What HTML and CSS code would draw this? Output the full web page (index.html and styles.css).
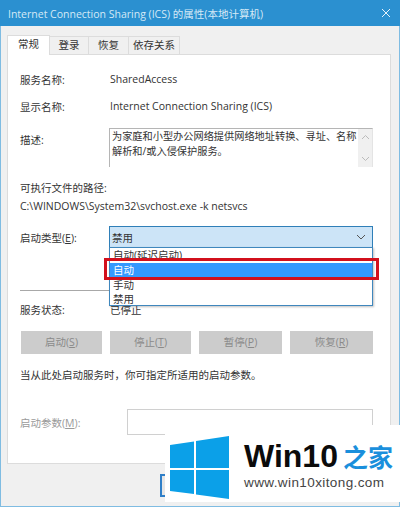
FILE: index.html
```html
<!DOCTYPE html>
<html lang="zh-CN">
<head>
    <meta charset="UTF-8">
    <meta name="viewport" content="width=device-width, initial-scale=1.0">
    <title>Internet Connection Sharing (ICS) 的属性(本地计算机)</title>
    <link rel="stylesheet" href="styles.css">
</head>
<body>
    <div class="window">
        <div class="titlebar">
            <span>Internet Connection Sharing (ICS) 的属性(本地计算机)</span>
            <svg class="close" width="10" height="10" viewBox="0 0 10 10"><path d="M1 1L9 9M9 1L1 9" stroke="#e6f2fa" stroke-width="1" fill="none"/></svg>
        </div>
        <div class="client">
            <div class="tabs">
                <div class="tab active">常规</div>
                <div class="tab tab-login">登录</div>
                <div class="tab tab-restore">恢复</div>
                <div class="tab tab-deps">依存关系</div>
            </div>
            <div class="panel">
                <div class="row row-name"><label>服务名称:</label><span>SharedAccess</span></div>
                <div class="row row-display"><label>显示名称:</label><span>Internet Connection Sharing (ICS)</span></div>
                <div class="row row-desc">
                    <label>描述:</label>
                    <div class="textarea">
                        <p>为家庭和小型办公网络提供网络地址转换、寻址、名称解析和/或入侵保护服务。</p>
                        <div class="scrollbar">
                            <svg width="9" height="6" viewBox="0 0 9 6"><path d="M1 5L4.500 1.500L8 5" stroke="#bbb" fill="none"/></svg>
                            <svg width="9" height="6" viewBox="0 0 9 6"><path d="M1 1L4.500 4.500L8 1" stroke="#bbb" fill="none"/></svg>
                        </div>
                    </div>
                </div>
                <div class="path-label">可执行文件的路径:</div>
                <div class="path-value">C:\WINDOWS\System32\svchost.exe -k netsvcs</div>
                <div class="row row-type">
                    <label>启动类型(<u>E</u>):</label>
                    <div class="select">
                        <span>禁用</span>
                        <svg width="10" height="6" viewBox="0 0 10 6"><path d="M1 1L5 5L9 1" stroke="#555" fill="none"/></svg>
                        <ul class="options">
                            <li>自动(延迟启动)</li>
                            <li class="selected">自动</li>
                            <li>手动</li>
                            <li>禁用</li>
                        </ul>
                        <div class="highlight"></div>
                    </div>
                </div>
                <hr class="divider">
                <div class="row row-status"><label>服务状态:</label><span>已停止</span></div>
                <div class="buttons">
                    <div class="btn btn-a">启动(<u>S</u>)</div>
                    <div class="btn btn-a">停止(<u>T</u>)</div>
                    <div class="btn btn-b">暂停(<u>P</u>)</div>
                    <div class="btn btn-b">恢复(<u>R</u>)</div>
                </div>
                <div class="hint">当从此处启动服务时，你可指定所适用的启动参数。</div>
                <div class="params">
                    <label>启动参数(<u>M</u>):</label>
                    <div class="param-input"></div>
                </div>
            </div>
            <div class="footer"><div class="ok"></div></div>
        </div>
    </div>

    <div class="watermark">
        <svg class="logo" width="60" height="60" viewBox="0 0 60 60">
            <path d="M0 5L24 1.500V28H0Z M26 1L59 -4V28H26Z M0 30H24V54L0 51Z M26 30H59V59L26 54.500Z" fill="#0ba0e8"/>
        </svg>
        <div class="brand">
            <div class="brand-top"><span class="win">Win10</span><span class="zhijia">之家</span></div>
            <div class="url">www.win10xitong.com</div>
        </div>
    </div>
</body>
</html>
```

FILE: styles.css
```css
* {
    box-sizing: border-box;
}
body {
    margin: 0;
    width: 400px;
    height: 507px;
    overflow: hidden;
    position: relative;
    font-family: "Open Sans", "Noto Sans CJK SC", sans-serif;
    font-size: 10.500px;
    color: #333;
    background: #f0f0f0;
}
u {
    text-decoration: underline;
}
.window {
    height: 507px;
    display: flex;
    flex-direction: column;
    border: 1px solid #7fbce2;
    border-top: none;
}
.titlebar {
    height: 26px;
    margin: 0 -1px;
    flex: none;
    display: flex;
    align-items: center;
    justify-content: space-between;
    padding: 0 9px 0 8px;
    background: #2b90d0;
    color: #d5e9f6;
}
.client {
    flex: 1;
    padding: 9px 8px 0 6px;
    display: flex;
    flex-direction: column;
}
.tabs {
    display: flex;
    align-items: flex-end;
    height: 19px;
}
.tab {
    height: 18px;
    line-height: 17px;
    text-align: center;
    background: #f0f0f0;
    border: 1px solid #dcdcdc;
    border-bottom: none;
    border-left: none;
}
.tab.active {
    width: 43px;
    height: 20px;
    margin-bottom: -1px;
    line-height: 17px;
    position: relative;
    background: #fff;
    border-left: 1px solid #dcdcdc;
}
.tab-login { width: 39px; }
.tab-restore { width: 40px; }
.tab-deps { width: 51px; }
.panel {
    height: 410px;
    background: #fff;
    border: 1px solid #dcdcdc;
    padding: 15px 17px 0 12px;
    display: flex;
    flex-direction: column;
}
.row {
    display: flex;
    align-items: center;
}
.row label {
    width: 89px;
    flex: none;
}
.row > span {
    margin-left: 1px;
}
.row-name, .row-display {
    height: 18px;
}
.row-display {
    margin-top: 9px;
}
.row-desc {
    margin-top: 13px;
    height: 39px;
    align-items: flex-start;
}
.row-desc label {
    margin-top: 3px;
    line-height: 18px;
}
.textarea {
    width: 264px;
    height: 39px;
    border: 1px solid #b5b5b5;
    border-right-color: #e4e4e4;
    border-bottom: none;
    display: flex;
    justify-content: space-between;
}
.textarea p {
    margin: 0 0 0 2px;
    width: 246px;
    line-height: 15px;
    font-size: 10.200px;
}
.scrollbar {
    width: 14px;
    display: flex;
    flex-direction: column;
    justify-content: space-between;
    align-items: center;
    padding: 5px 0 5px;
    background: #f0f0f0;
}
.path-label {
    margin-top: 12px;
    height: 18px;
    line-height: 18px;
}
.path-value {
    height: 18px;
    line-height: 18px;
}
.row-type {
    margin-top: 11px;
    height: 22px;
}
.select {
    position: relative;
    width: 264px;
    height: 22px;
    background: #cce4f7;
    border: 1px solid #2f7fb8;
    display: flex;
    align-items: center;
    justify-content: space-between;
    padding: 0 6px 0 2px;
}
.options {
    position: absolute;
    left: -1px;
    top: 20px;
    width: 264px;
    height: 59px;
    margin: 0;
    padding: 0;
    list-style: none;
    background: #fff;
    border: 1px solid #3f87bd;
    box-shadow: 1px 1px 2px rgba(0, 0, 0, 0.25);
}
.options li {
    height: 14.500px;
    line-height: 14px;
    padding-left: 3px;
}
.options li.selected {
    height: 15px;
    background: #3399ff;
    color: #fff;
}
.highlight {
    position: absolute;
    left: -6px;
    top: 31px;
    width: 275px;
    height: 22px;
    border: 3px solid #d2101c;
}
.divider {
    margin: 42px 0 0;
    width: 100%;
    height: 1px;
    border: none;
    flex: none;
    background: #a8a8a8;
}
.row-status {
    margin-top: 9px;
    height: 18px;
}
.buttons {
    margin-top: 13px;
    display: flex;
    gap: 8px;
    padding-left: 1px;
}
.btn {
    height: 23px;
    line-height: 22px;
    text-align: center;
    background: #cccccc;
    color: #8a8a8a;
}
.btn-a { width: 81px; }
.btn-b { width: 83px; }
.hint {
    margin-top: 12px;
    height: 18px;
    line-height: 18px;
}
.params {
    margin-top: 25px;
    display: flex;
    align-items: center;
    color: #9a9a9a;
}
.params label {
    width: 107px;
    flex: none;
}
.param-input {
    width: 246px;
    height: 26px;
    border: 1px solid #d0d0d0;
}
.footer {
    flex: 1;
    display: flex;
    padding: 10px 0 0 153px;
}
.ok {
    width: 76px;
    height: 23px;
    border: 2px solid #2f7fc8;
    background: #e6e6e6;
}
.watermark {
    position: absolute;
    left: 165px;
    top: 425px;
    width: 235px;
    height: 77px;
    background: #fff;
    display: flex;
    padding: 15px 0 0 5px;
}
.logo {
    overflow: visible;
}
.brand {
    margin-left: 14px;
    margin-top: -4px;
}
.brand-top {
    display: flex;
    align-items: center;
    height: 34px;
    margin-top: 3px;
}
.win {
    font-family: "Liberation Sans", sans-serif;
    font-weight: bold;
    font-size: 32px;
    color: #0b0b0b;
}
.zhijia {
    margin-left: 5px;
    font-family: "Noto Sans CJK SC", sans-serif;
    font-weight: bold;
    font-size: 25px;
    color: #1a8fdc;
}
.url {
    margin-top: 2px;
    font-family: "Liberation Sans", sans-serif;
    font-size: 13.500px;
    letter-spacing: 0.4px;
    color: #444;
    white-space: nowrap;
}
```
